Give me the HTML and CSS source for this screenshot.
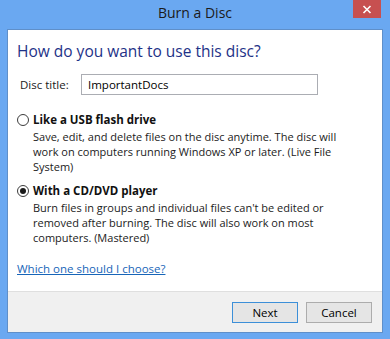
FILE: index.html
```html
<!DOCTYPE html>
<html>
<head>
<meta charset="utf-8">
<link rel="stylesheet" href="styles.css">
</head>
<body>
<div class="window">
  <div class="titlebar">
    <div class="title">Burn a Disc</div>
    <div class="close">
      <svg width="10" height="9" viewBox="0 0 10 9"><path d="M1.5 1 L8.5 8 M8.5 1 L1.5 8" stroke="#ffffff" stroke-width="1.6" fill="none"/></svg>
    </div>
  </div>
  <div class="client">
    <div class="content">
      <div class="heading">How do you want to use this disc?</div>
      <div class="field">
        <label class="field-label" for="t">Disc title:</label>
        <input class="field-input" id="t" type="text" value="ImportantDocs">
      </div>
      <div class="option">
        <div class="option-head">
          <span class="radio"></span>
          <span class="option-title">Like a USB flash drive</span>
        </div>
        <div class="option-desc">Save, edit, and delete files on the disc anytime. The disc will work on computers running Windows XP or later. (Live File System)</div>
      </div>
      <div class="option">
        <div class="option-head">
          <span class="radio checked"></span>
          <span class="option-title">With a CD/DVD player</span>
        </div>
        <div class="option-desc">Burn files in groups and individual files can't be edited or removed after burning. The disc will also work on most computers. (Mastered)</div>
      </div>
      <a class="help" href="#">Which one should I choose?</a>
    </div>
    <div class="footer">
      <button class="btn btn-default">Next</button>
      <button class="btn">Cancel</button>
    </div>
  </div>
</div>
</body>
</html>
```
FILE: styles.css
```css
html, body {
  margin: 0;
  padding: 0;
}
body {
  background: #6aa8f1;
  font-family: "Open Sans", "Noto Sans", sans-serif;
  font-size: 11px;
  color: #000;
}
.window {
  width: 390px;
  height: 339px;
  display: flex;
  flex-direction: column;
}
.titlebar {
  height: 29px;
  display: grid;
  grid-template-columns: 1fr auto 1fr;
  align-items: start;
}
.title {
  grid-column: 2;
  font-size: 14px;
  line-height: 26px;
  color: #1b1b1b;
}
.close {
  grid-column: 3;
  justify-self: end;
  margin-right: 9px;
  width: 28px;
  height: 18px;
  background: #c75050;
  display: flex;
  align-items: center;
  justify-content: center;
}
.client {
  margin: 0 7px;
  height: 304px;
  box-sizing: border-box;
  border: 1px solid #5f8fc9;
  background: #fff;
  display: flex;
  flex-direction: column;
}
.content {
  flex: 1;
  padding: 10px 9px 0 9px;
  display: flex;
  flex-direction: column;
}
.heading {
  font-size: 15.5px;
  line-height: 22px;
  color: #1e3287;
}
.field {
  display: flex;
  align-items: center;
  margin-top: 12px;
  padding-left: 3px;
}
.field-label {
  width: 61px;
  font-size: 11.5px;
  color: #1b1b1b;
}
.field-input {
  width: 237px;
  height: 21px;
  box-sizing: border-box;
  border: 1px solid #abadb3;
  padding: 0 6px;
  font: inherit;
  font-size: 11.5px;
  color: #000;
  outline: none;
}
.option {
  margin-top: 17px;
}
.option + .option {
  margin-top: 9px;
}
.option-head {
  display: flex;
  align-items: center;
  gap: 4px;
  line-height: 16px;
}
.option-title {
  font-weight: bold;
  font-size: 11.5px;
  color: #111;
}
.radio {
  width: 12px;
  height: 12px;
  box-sizing: border-box;
  border: 1px solid #3c3c3c;
  border-radius: 50%;
  background: #fff;
  position: relative;
}
.radio.checked::after {
  content: "";
  position: absolute;
  left: 2px;
  top: 2px;
  width: 6px;
  height: 6px;
  border-radius: 50%;
  background: #1a1a1a;
}
.option-desc {
  padding-left: 16px;
  padding-right: 23px;
  padding-top: 1px;
  line-height: 15px;
  color: #1b1b1b;
}
.help {
  margin-top: 16px;
  font-size: 11.5px;
  color: #1765b8;
  text-decoration: underline;
  align-self: flex-start;
}
.footer {
  height: 40px;
  border-top: 1px solid #dfdfdf;
  background: #f0f0f0;
  display: flex;
  justify-content: flex-end;
  align-items: center;
  gap: 8px;
  padding-right: 10px;
}
.btn {
  width: 66px;
  height: 21px;
  box-sizing: border-box;
  border: 1px solid #acacac;
  background: #e5e5e5;
  font: inherit;
  font-size: 11.5px;
  color: #000;
  padding: 0;
}
.btn-default {
  border-color: #3c8fd8;
}
```
